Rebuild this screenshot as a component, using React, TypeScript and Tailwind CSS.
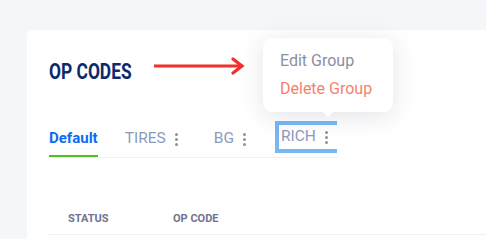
import React from 'react';

const Dots = () => (
    <span className="ml-[9px] flex flex-col gap-[2px]">
        <span className="block h-[3px] w-[3px] rounded-full bg-[#8b90a5]" />
        <span className="block h-[3px] w-[3px] rounded-full bg-[#8b90a5]" />
        <span className="block h-[3px] w-[3px] rounded-full bg-[#8b90a5]" />
    </span>
);

const App: React.FC = () => {
    return (
        <div className="relative h-[239px] w-[486px] overflow-hidden bg-[#f5f6fa] pl-[27px] pt-[30px] font-['Roboto',sans-serif]">
            <div className="h-[220px] rounded-tl-[5px] bg-white pl-[22px] pt-[28px]">
                {/* title row */}
                <div className="flex h-[28px] items-start">
                    <div className="w-[85px] whitespace-nowrap">
                        <h1 className="origin-left scale-x-[0.79] text-[22px] font-bold leading-[28px] text-[#0d2a6c]">
                            OP CODES
                        </h1>
                    </div>
                    <svg className="ml-[19px] mt-[-1px]" width="92" height="18" viewBox="0 0 92 18">
                        <path d="M1 9 H88" stroke="#f22e2e" strokeWidth="3.2" />
                        <path d="M80 2 L89 9 L80 16" stroke="#f22e2e" strokeWidth="3.2" fill="none" strokeLinecap="round" />
                    </svg>
                </div>

                {/* tabs */}
                <div className="mt-[35px] flex w-[290px] items-stretch border-b border-[#eef0f4] text-[15px]">
                    <div className="-mb-px flex h-[36px] items-center border-b-2 border-[#4fc21d] font-bold text-[#0b6cf2]">
                        Default
                    </div>
                    <div className="ml-[27px] flex h-[36px] items-center text-[15.5px] text-[#8d9abb]">
                        TIRES
                        <Dots />
                    </div>
                    <div className="ml-[36px] flex h-[36px] items-center text-[15.5px] text-[#8d9abb]">
                        BG
                        <Dots />
                    </div>
                    <div className="ml-[29px] flex h-[32px] w-[62px] items-center border-y-4 border-l-4 border-[#78b7f4] pl-[2px] text-[15.5px] text-[#8d9abb]">
                        RICH
                        <Dots />
                    </div>
                </div>

                {/* table header */}
                <div className="mt-[47px] flex h-[30px] items-end border-b border-[#eef0f4] pb-[7px] text-[11px] font-bold text-[#6f7390]">
                    <span className="ml-[19px] w-[105px]">STATUS</span>
                    <span>OP CODE</span>
                </div>
            </div>

            {/* dropdown menu */}
            <div className="absolute left-[263px] top-[38px] h-[74px] w-[130px] rounded-[9px] bg-white pl-[17px] pt-[9px] text-[16px] leading-[28px] shadow-[0_4px_24px_rgba(30,40,70,0.13)]">
                <div className="text-[#8b8ea4]">Edit Group</div>
                <div className="text-[#f7816c]">Delete Group</div>
                <span className="absolute left-[59px] top-[73px] h-0 w-0 border-x-[6px] border-t-[6px] border-x-transparent border-t-white" />
            </div>
        </div>
    );
};

export default App;
